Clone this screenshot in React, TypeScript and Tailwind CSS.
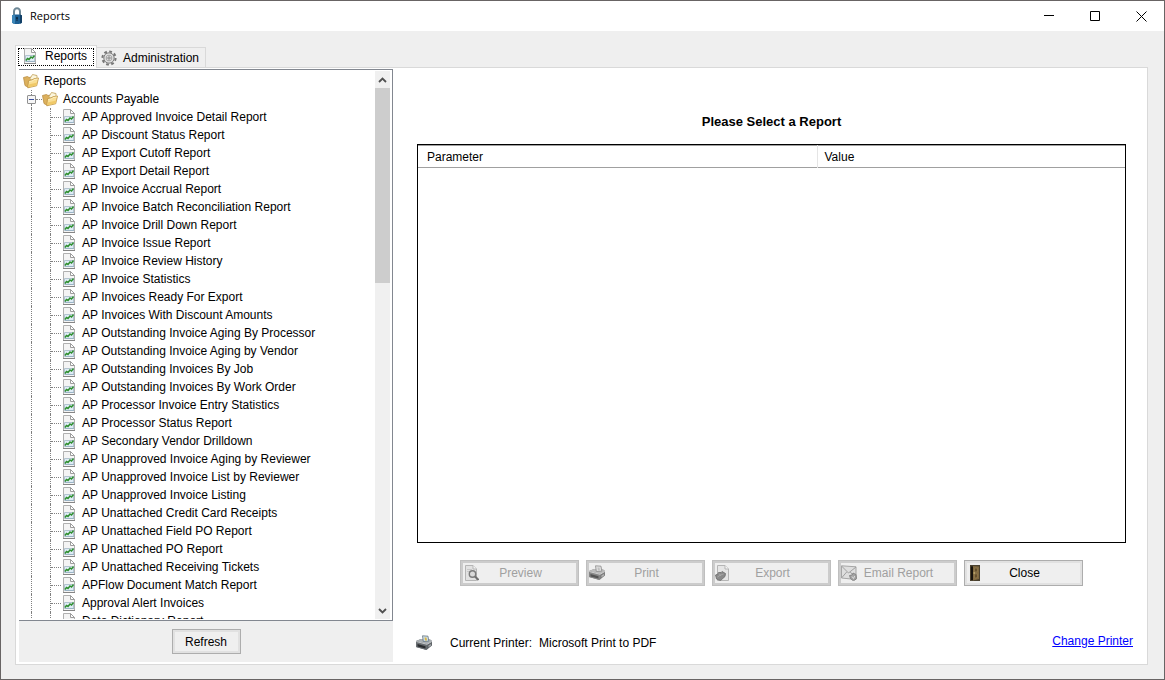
import { useState } from "react";
import type { ReactNode } from "react";
import clsx from "clsx";

const PAYABLE_REPORTS = [
  "AP Approved Invoice Detail Report",
  "AP Discount Status Report",
  "AP Export Cutoff Report",
  "AP Export Detail Report",
  "AP Invoice Accrual Report",
  "AP Invoice Batch Reconciliation Report",
  "AP Invoice Drill Down Report",
  "AP Invoice Issue Report",
  "AP Invoice Review History",
  "AP Invoice Statistics",
  "AP Invoices Ready For Export",
  "AP Invoices With Discount Amounts",
  "AP Outstanding Invoice Aging By Processor",
  "AP Outstanding Invoice Aging by Vendor",
  "AP Outstanding Invoices By Job",
  "AP Outstanding Invoices By Work Order",
  "AP Processor Invoice Entry Statistics",
  "AP Processor Status Report",
  "AP Secondary Vendor Drilldown",
  "AP Unapproved Invoice Aging by Reviewer",
  "AP Unapproved Invoice List by Reviewer",
  "AP Unapproved Invoice Listing",
  "AP Unattached Credit Card Receipts",
  "AP Unattached Field PO Report",
  "AP Unattached PO Report",
  "AP Unattached Receiving Tickets",
  "APFlow Document Match Report",
  "Approval Alert Invoices",
  "Data Dictionary Report",
];

type IconProps = { className?: string };

function LockIcon({ className }: IconProps) {
  return (
    <svg viewBox="0 0 12 18" className={className} aria-hidden="true">
      <path d="M3 9V4.500a3 3.200 0 0 1 6 0V9" fill="none" stroke="#6d8796" strokeWidth="2" />
      <path d="M1 8.500c1.500-1.200 8.500-1.200 10 0V15.500c-1.500 2-8.500 2-10 0z" fill="#1c5f93" />
      <path d="M1 8.500c.8-.6 2-.8 3-.9v9.200c-1-.1-2.300-.5-3-1.300z" fill="#3c86b8" />
      <path d="M9 7.800c.8.100 1.500.3 2 .7V15.500c-.5.600-1.200.900-2 1.100z" fill="#123f66" />
      <circle cx="6" cy="11" r="1.100" fill="#0b2740" />
      <path d="M5.500 11h1v3h-1z" fill="#0b2740" />
    </svg>
  );
}

function ChartPageIcon({ className }: IconProps) {
  return (
    <svg viewBox="0 0 16 16" className={className} aria-hidden="true">
      <path d="M1.500.5h7l4 4v11h-11z" fill="#f4f4f4" stroke="#b0b0b0" />
      <path d="M8.500.5v4h4z" fill="#fff" stroke="#9c9c9c" />
      <path d="M2.500 7.500h9v6h-9z" fill="#dfecf6" stroke="#b3c4d0" />
      <path d="M3 12.500l1.500-2 1.500 1 2-2.500 1.500 1L11.500 7.500" fill="none" stroke="#2f8f2f" strokeWidth="1.500" />
      <path d="M3 13.500h9" stroke="#9bb4c6" />
      <path d="M1 15.500h12" stroke="#858585" />
    </svg>
  );
}

function FolderIcon({ className }: IconProps) {
  return (
    <svg viewBox="0 0 16 16" className={className} aria-hidden="true">
      <path d="M.5 4.500L4.500 3.500l1.500 1 3-.5 4-1.500 1 4-8.500 8L2 12.500z" fill="#dcb05c" stroke="#b98d42" strokeWidth=".8" />
      <path d="M7 5.500l2.500-4 4.500 1V6L8 7z" fill="#fbf5dc" stroke="#c2a25c" strokeWidth=".8" />
      <path d="M4.800 14.800L5.500 7.800l4-.8 1-1.200 5-.8-1.800 7.800z" fill="#f9de93" stroke="#be9344" strokeWidth=".8" />
      <path d="M5.600 11.500l8.600-2-.8 3-8 1.800z" fill="#f0c968" />
      <path d="M6.200 8.500l3.800-.8 1-1.100 3.700-.6" fill="none" stroke="#fdf0c4" strokeWidth=".9" />
    </svg>
  );
}

function GearIcon({ className }: IconProps) {
  return (
    <svg viewBox="0 0 16 16" className={className} aria-hidden="true">
      <circle cx="8" cy="8" r="6.600" fill="none" stroke="#777" strokeWidth="2" strokeDasharray="2.800 2.384" />
      <circle cx="8" cy="8" r="5.200" fill="#dcdcdc" stroke="#7d7d7d" />
      <circle cx="8" cy="8" r="2.800" fill="#fafafa" stroke="#a0a0a0" />
      <circle cx="8" cy="8" r="1.300" fill="#c4c4c4" stroke="#777" strokeWidth=".8" />
    </svg>
  );
}

function PrinterIcon({ className }: IconProps) {
  return (
    <svg viewBox="0 0 16 16" className={className} aria-hidden="true">
      <path d="M0 6l5-2 9 .5 2 1.500v4.500L10.500 15 0 12z" fill="#5f6468" />
      <path d="M0 6l5-2 9 .5 2 1.500-5 3z" fill="#aab0b4" />
      <path d="M6.500.8l5.500.4.800 5-5.500.3z" fill="#cfe0ec" stroke="#64747f" strokeWidth=".8" />
      <path d="M8.500 2.500h2l.5 3H9z" fill="#d8b544" />
      <path d="M0 6l11 3-.5 6L0 12z" fill="#6a6f73" />
      <path d="M1.500 9l8 2.200v2.300l-8-2z" fill="#2a2d30" />
      <path d="M.3 6.500L11 9.300 15.800 6.500" fill="none" stroke="#dfe2e4" strokeWidth=".8" />
      <path d="M12.500 10.500l2.500-1.500v1.500l-2.500 1.700z" fill="#a5a9ac" />
    </svg>
  );
}

function PreviewIcon({ className }: IconProps) {
  return (
    <svg viewBox="0 0 16 16" className={className} aria-hidden="true">
      <path d="M2.500.5H10l3.500 3.500v11.500h-11z" fill="#e2e2e2" stroke="#b5b5b5" />
      <path d="M10 .5v3.500h3.500" fill="#f5f5f5" stroke="#b5b5b5" />
      <path d="M4 4.500h5M4 6.500h3" stroke="#c8c8c8" />
      <circle cx="9.500" cy="9" r="3.200" fill="#dadada" stroke="#7b7b7b" strokeWidth="1.400" />
      <path d="M12 11.500l3.500 3.500" stroke="#707070" strokeWidth="2" />
    </svg>
  );
}

function ExportIcon({ className }: IconProps) {
  return (
    <svg viewBox="0 0 16 16" className={className} aria-hidden="true">
      <path d="M2.500.5H10l3.500 3.500v11.500h-11z" fill="#e6e6e6" stroke="#b5b5b5" />
      <path d="M10 .5v3.500h3.500" fill="#f7f7f7" stroke="#b5b5b5" />
      <path d="M.5 10L3 9l.5-1.500L6 7.500l1-1 3.500 2-.5 3L5.500 15.500 1.500 14z" fill="#8a8a8a" stroke="#6c6c6c" strokeWidth=".8" />
      <path d="M2.500 12l3-2 3-1M4 8.500l2 2.500" stroke="#adadad" fill="none" strokeWidth=".8" />
    </svg>
  );
}

function EmailIcon({ className }: IconProps) {
  return (
    <svg viewBox="0 0 16 16" className={className} aria-hidden="true">
      <path d="M.5.800l14.500 1v12.700l-14.500-1.500z" fill="#dedede" stroke="#a5a5a5" />
      <path d="M.5 1l7 7L15 2M.5 13l5.200-6M15 13.500L9.300 7" fill="none" stroke="#a0a0a0" />
      <path d="M8.500 10.500l2.500-.5 1-2 3 1.500.5 4-3 2.500-3-2.500z" fill="#a3a3a3" stroke="#7b7b7b" strokeWidth=".8" />
      <path d="M11 11.500l1.500 2 1.200-2.500" fill="none" stroke="#ddd" />
    </svg>
  );
}

function DoorIcon({ className }: IconProps) {
  return (
    <svg viewBox="0 0 16 16" className={className} aria-hidden="true">
      <path d="M3 0h10v16H3z" fill="#4a412f" />
      <path d="M4 1.500h2V15H4z" fill="#17130d" />
      <path d="M6 1l6 .5V14l-6 1.500z" fill="#80693f" />
      <path d="M7.500 3l3 .2v3.600l-3 .2zM7.500 9l3-.2V12.500l-3 .7z" fill="#64502c" stroke="#998256" strokeWidth=".6" />
      <circle cx="7.200" cy="8" r=".8" fill="#d9c67f" />
    </svg>
  );
}

function WindowButton({ label, children }: { label: string; children: ReactNode }) {
  return (
    <button type="button" aria-label={label} className="flex w-[46px] items-center justify-center hover:bg-[#e5e5e5]">
      <svg viewBox="0 0 11 11" className="h-[11px] w-[11px]" fill="none" stroke="#000" aria-hidden="true">
        {children}
      </svg>
    </button>
  );
}

function TitleBar() {
  return (
    <header className="flex h-[30px] shrink-0 bg-white">
      <div className="flex flex-1 items-center gap-[7px] pl-[10px]">
        <LockIcon className="h-[18px] w-3" />
        <h1 className="font-['Open_Sans','Noto_Sans',sans-serif] text-[11px] leading-4">Reports</h1>
      </div>
      <WindowButton label="Minimize">
        <path d="M0 4.500h10" />
      </WindowButton>
      <WindowButton label="Maximize">
        <path d="M.5.500h9v9h-9z" />
      </WindowButton>
      <WindowButton label="Close window">
        <path d="M.5.500l10 10M10.500.500l-10 10" />
      </WindowButton>
    </header>
  );
}

function ReportTree() {
  const [expanded, setExpanded] = useState(true);
  const [selected, setSelected] = useState("");

  return (
    <div className="flex min-h-0 flex-1 border-y border-r border-[#828790] bg-white py-px pr-[2px]">
      <ul role="tree" aria-label="Reports" className="min-w-0 flex-1 overflow-hidden pt-px">
        <li role="treeitem" className="flex h-[18px] items-center gap-[5px] pl-1">
          <FolderIcon className="h-4 w-4" />
          Reports
        </li>
        <li role="treeitem" aria-expanded={expanded}>
          <div className="flex h-[18px] items-center pl-2">
            <span className="flex h-full w-[9px] flex-col items-center">
              <span className="flex-1 border-l border-dotted border-[#808080]" />
              <button
                type="button"
                aria-label="Toggle Accounts Payable"
                onClick={() => setExpanded(!expanded)}
                className="flex h-[9px] w-[9px] items-center justify-center rounded-[1px] border border-[#919191] bg-[#f6f6f6]"
              >
                <span className="h-px w-[5px] bg-[#3b4fa0]" />
              </button>
              <span className="flex-1 border-l border-dotted border-[#808080]" />
            </span>
            <span className="w-[6px] border-t border-dotted border-[#808080]" />
            <FolderIcon className="mr-[5px] h-4 w-4" />
            Accounts Payable
          </div>
          {expanded && (
            <ul role="group">
              {PAYABLE_REPORTS.map((name) => (
                <li key={name} role="treeitem" className="flex h-[18px] items-center pl-3" onClick={() => setSelected(name)}>
                  <span className="h-full w-[19px] border-l border-dotted border-[#808080]" />
                  <span className="flex h-full w-[11px] items-center border-l border-dotted border-[#808080]">
                    <span className="w-full border-t border-dotted border-[#808080]" />
                  </span>
                  <ChartPageIcon className="mr-1 ml-px h-4 w-4" />
                  <span className={clsx("whitespace-nowrap", selected === name && "bg-[#0078d7] text-white")}>{name}</span>
                </li>
              ))}
            </ul>
          )}
        </li>
      </ul>

      <div className="flex w-[15px] flex-col bg-[#f0f0f0]">
        <button type="button" aria-label="Scroll up" className="flex h-[17px] shrink-0 items-center justify-center">
          <svg viewBox="0 0 9 6" className="h-[6px] w-[9px]" aria-hidden="true">
            <path d="M1 5l3.500-3.500L8 5" fill="none" stroke="#505050" strokeWidth="1.800" />
          </svg>
        </button>
        <div className="min-h-0 flex-1">
          <div className="h-[38%] bg-[#cdcdcd]" />
        </div>
        <button type="button" aria-label="Scroll down" className="flex h-[17px] shrink-0 items-center justify-center">
          <svg viewBox="0 0 9 6" className="h-[6px] w-[9px]" aria-hidden="true">
            <path d="M1 1l3.500 3.500L8 1" fill="none" stroke="#505050" strokeWidth="1.800" />
          </svg>
        </button>
      </div>
    </div>
  );
}

type ActionButtonProps = {
  label: string;
  icon: ReactNode;
  disabled?: boolean;
};

function ActionButton({ label, icon, disabled }: ActionButtonProps) {
  return (
    <button
      type="button"
      disabled={disabled}
      className={clsx(
        "flex h-[26px] w-[119px] items-center border",
        disabled ? "border-[#bfbfbf] bg-[#cccccc] text-[#a0a0a0]" : "border-[#adadad] bg-[#e1e1e1] text-black",
      )}
    >
      <span className="m-[2px] flex h-5 flex-1 items-center bg-[#efefef]">
        {icon}
        <span className="flex-1 pr-[14px] text-center">{label}</span>
      </span>
    </button>
  );
}

function ReportDetails() {
  return (
    <main className="flex min-w-0 flex-1 flex-col pr-[21px] pl-6">
      <h2 className="mt-[46px] text-center text-[13px] leading-4 font-bold">Please Select a Report</h2>
      <div className="mt-[14px] min-h-0 flex-1 border border-black">
        <table className="w-full table-fixed border-collapse text-left">
          <thead>
            <tr className="h-[22px] border-t border-b border-t-[#a0a0a0] border-b-[#a0a0a0]">
              <th className="w-[399px] border-r border-[#e5e5e5] py-0 pl-[9px] font-normal">Parameter</th>
              <th className="py-0 pl-[7px] font-normal">Value</th>
            </tr>
          </thead>
          <tbody />
        </table>
      </div>
      <div className="mt-[17px] flex justify-center gap-[7px]">
        <ActionButton label="Preview" disabled icon={<PreviewIcon className="h-4 w-4" />} />
        <ActionButton label="Print" disabled icon={<PrinterIcon className="h-4 w-4 opacity-80 grayscale" />} />
        <ActionButton label="Export" disabled icon={<ExportIcon className="h-4 w-4" />} />
        <ActionButton label="Email Report" disabled icon={<EmailIcon className="h-4 w-4" />} />
        <ActionButton label="Close" icon={<DoorIcon className="h-4 w-4" />} />
      </div>
      <footer className="mt-[47px] mb-[11px] flex h-5 items-center">
        <PrinterIcon className="mr-[18px] -ml-px h-4 w-4" />
        <span>Current Printer:</span>
        <span className="ml-[7px]">Microsoft Print to PDF</span>
        <a href="#printer" className="-mr-[7px] mb-1 ml-auto text-[#0000ff] underline">
          Change Printer
        </a>
      </footer>
    </main>
  );
}

export default function App() {
  return (
    <div className="flex h-screen flex-col overflow-hidden border border-[#686464] bg-[#efefef] font-['Liberation_Sans',Arial,sans-serif] text-[12px] leading-4 text-black">
      <TitleBar />
      <div className="flex min-h-0 flex-1 flex-col px-[14px] pt-[14px] pr-4 pb-[14px]">
        <div role="tablist" className="z-10 -mb-px flex items-end">
          <button
            type="button"
            role="tab"
            aria-selected="true"
            className="h-[23px] border border-b-0 border-[#d9d9d9] bg-white p-[2px]"
          >
            <span className="flex h-[18px] w-[76px] items-center gap-[6px] border border-dotted border-black pb-[2px] pl-1">
              <ChartPageIcon className="h-4 w-4" />
              Reports
            </span>
          </button>
          <button
            type="button"
            role="tab"
            aria-selected="false"
            className="mb-px flex h-5 w-[109px] items-center gap-[6px] border border-b-0 border-l-0 border-[#d9d9d9] pl-1"
          >
            <GearIcon className="h-4 w-4" />
            Administration
          </button>
        </div>
        <div className="flex min-h-0 flex-1 border border-[#d9d9d9] bg-white">
          <aside className="mt-px mb-[2px] ml-[3px] flex w-[374px] shrink-0 flex-col bg-[#efefef]">
            <ReportTree />
            <div className="flex h-[41px] items-center justify-center">
              <button type="button" className="h-[25px] w-[69px] border border-[#adadad] bg-[#e1e1e1] p-[2px]">
                <span className="flex h-full items-center justify-center bg-[#efefef]">Refresh</span>
              </button>
            </div>
          </aside>
          <ReportDetails />
        </div>
      </div>
    </div>
  );
}
